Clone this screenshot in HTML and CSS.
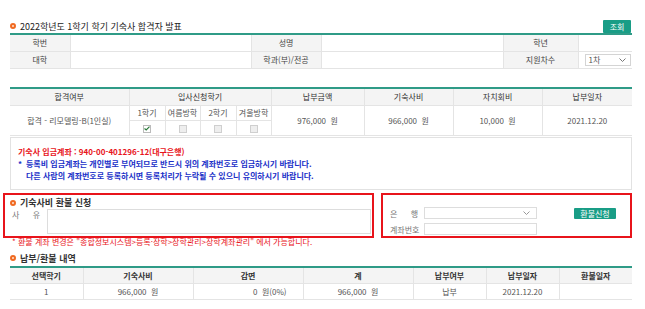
FILE: index.html
```html
<!DOCTYPE html>
<html lang="ko">
<head>
<meta charset="UTF-8">
<title>기숙사 합격자 발표</title>
<link rel="stylesheet" href="styles.css">
</head>
<body>

<div class="page">
    <div class="title-row">
        <h2 class="sec-title"><span class="dot"></span>2022학년도 1학기 학기 기숙사 합격자 발표</h2>
        <button class="btn btn-search">조회</button>
    </div>

    <table class="grid info">
        <colgroup>
            <col style="width:60px"><col style="width:181px"><col style="width:70px">
            <col style="width:182px"><col style="width:75px"><col style="width:54px">
        </colgroup>
        <tr>
            <th>학번</th><td></td>
            <th>성명</th><td></td>
            <th>학년</th><td></td>
        </tr>
        <tr>
            <th>대학</th><td></td>
            <th>학과(부)/전공</th><td></td>
            <th>지원차수</th>
            <td class="left">
                <div class="select small">1차
                    <svg width="7" height="4" viewBox="0 0 7 4"><polyline points="0.5,0.5 3.5,3.5 6.5,0.5" fill="none" stroke="#777" stroke-width="1"/></svg>
                </div>
            </td>
        </tr>
    </table>

    <table class="grid result">
        <colgroup>
            <col style="width:119px"><col style="width:36px"><col style="width:35px">
            <col style="width:36px"><col style="width:35px"><col style="width:93px">
            <col style="width:89px"><col style="width:89px"><col style="width:90px">
        </colgroup>
        <tr class="head">
            <th>합격여부</th>
            <th colspan="4">입사신청학기</th>
            <th>납부금액</th>
            <th>기숙사비</th>
            <th>자치회비</th>
            <th>납부일자</th>
        </tr>
        <tr class="sub">
            <td rowspan="2">합격 - 리모델링-B(1인실)</td>
            <td>1학기</td><td>여름방학</td><td>2학기</td><td>겨울방학</td>
            <td rowspan="2">976,000 &nbsp;원</td>
            <td rowspan="2">966,000 &nbsp;원</td>
            <td rowspan="2">10,000 &nbsp;원</td>
            <td rowspan="2">2021.12.20</td>
        </tr>
        <tr class="checks">
            <td><span class="check on"><svg width="6" height="5" viewBox="0 0 6 5"><polyline points="0.5,2.5 2.2,4 5.5,0.6" fill="none" stroke="#2a7a3a" stroke-width="1.2"/></svg></span></td>
            <td><span class="check"></span></td>
            <td><span class="check"></span></td>
            <td><span class="check"></span></td>
        </tr>
    </table>

    <div class="notice">
        <p class="red">기숙사 입금계좌 : 940-00-401296-12(대구은행)</p>
        <p class="blue"><span class="star">*</span>등록비 입금계좌는 개인별로 부여되므로 반드시 위의 계좌번호로 입금하시기 바랍니다.</p>
        <p class="blue indent">다른 사람의 계좌번호로 등록하시면 등록처리가 누락될 수 있으니 유의하시기 바랍니다.</p>
    </div>

    <div class="refund">
        <div class="mark refund-reason">
            <h2 class="sec-title sub"><span class="dot"></span>기숙사비 환불 신청</h2>
            <div class="reason-row">
                <span class="spread reason-label"><span>사</span><span>유</span></span>
                <textarea class="reason-box"></textarea>
            </div>
        </div>
        <div class="mark refund-account">
            <span class="spread bank-label"><span>은</span><span>행</span></span>
            <div class="select bank">
                <svg width="7" height="4" viewBox="0 0 7 4"><polyline points="0.5,0.5 3.5,3.5 6.5,0.5" fill="none" stroke="#999" stroke-width="1"/></svg>
            </div>
            <button class="btn btn-refund">환불신청</button>
            <span class="bank-label">계좌번호</span>
            <input type="text" class="account-input">
        </div>
    </div>

    <p class="note">* 환불 계좌 변경은 "종합정보시스템&gt;등록·장학&gt;장학관리&gt;장학계좌관리" 에서 가능합니다.</p>

    <h2 class="sec-title sub history-title"><span class="dot"></span>납부/환불 내역</h2>

    <table class="grid history">
        <colgroup>
            <col style="width:73px"><col style="width:110px"><col style="width:110px">
            <col style="width:110px"><col style="width:73px"><col style="width:73px">
            <col style="width:73px">
        </colgroup>
        <tr class="head">
            <th>선택학기</th><th>기숙사비</th><th>감면</th><th>계</th>
            <th>납부여부</th><th>납부일자</th><th>환불일자</th>
        </tr>
        <tr>
            <td>1</td>
            <td>966,000 &nbsp;원</td>
            <td class="right">0 &nbsp;원(0%)</td>
            <td>966,000 &nbsp;원</td>
            <td>납부</td>
            <td>2021.12.20</td>
            <td></td>
        </tr>
    </table>
</div>

</body>
</html>
```

FILE: styles.css
```css
body {
    margin: 0;
    background-color: #fff;
    font-family: "Noto Sans CJK KR", "Noto Sans", sans-serif;
    font-size: 8px;
    color: #555;
}
.page {
    width: 622px;
    margin-left: 10px;
    padding-top: 19px;
}
.title-row {
    display: flex;
    justify-content: space-between;
    align-items: center;
    height: 14px;
}
.sec-title {
    display: flex;
    align-items: center;
    gap: 4px;
    margin: 0;
    font-size: 9px;
    line-height: 11px;
    font-weight: normal;
    color: #222;
}
.sec-title.sub {
    font-weight: bold;
    color: #333;
}
.dot {
    width: 2px;
    height: 2px;
    border: 2px solid #f06a22;
    border-radius: 50%;
    background-color: #fde3d3;
}
.btn {
    font-family: inherit;
    font-size: 8px;
    color: #fff;
    background-color: #199d86;
    border: none;
    border-radius: 1px;
    padding: 0;
    cursor: pointer;
}
.btn-search {
    width: 28px;
    height: 13px;
    margin-right: 1px;
}

/* tables */
.grid {
    width: 622px;
    border-collapse: collapse;
    table-layout: fixed;
    border-top: 2px solid #2f9b87;
    border-left: hidden;
    border-right: hidden;
}
.grid th, .grid td {
    border: 1px solid #e4e4e4;
    padding: 0;
    text-align: center;
    font-weight: normal;
    line-height: 10px;
}
.info th {
    background-color: #f4f4f4;
    color: #444;
    height: 16px;
}
.info td {
    height: 16px;
}
.info td.left {
    text-align: left;
    padding-left: 6px;
}
.select {
    display: flex;
    justify-content: space-between;
    align-items: center;
    box-sizing: border-box;
    border: 1px solid #d4d4d4;
    background-color: #fff;
    color: #555;
}
.select.small {
    width: 46px;
    height: 12px;
    padding: 0 4px 0 3px;
}

.result {
    margin-top: 18px;
}
.result .head th {
    background-color: #f4f4f4;
    color: #333;
    height: 16px;
}
.result .sub td {
    height: 14px;
}
.result .checks td {
    height: 14px;
}
.check {
    display: inline-flex;
    justify-content: center;
    align-items: center;
    box-sizing: border-box;
    width: 8px;
    height: 8px;
    border: 1px solid #cfcfcf;
    background-color: #eee;
    vertical-align: middle;
}
.check.on {
    background-color: #fff;
    border-color: #bbb;
}

/* notice */
.notice {
    margin-top: 1px;
    border: 1px solid #e2e2e2;
    padding: 8px 7px 7px;
}
.notice p {
    margin: 0;
    font-weight: bold;
    line-height: 12px;
}
.red {
    color: #e8141b;
}
.blue {
    color: #2030c8;
}
.star {
    display: inline-block;
    width: 8px;
}
.indent {
    padding-left: 8px;
}

/* refund */
.refund {
    display: flex;
    gap: 7px;
    margin: 3px 0 0 -7px;
}
.mark {
    box-sizing: border-box;
    border: 2px solid #e8141b;
    height: 45px;
}
.refund-reason {
    width: 371px;
    padding: 2px 1px 0 5px;
}
.reason-row {
    display: flex;
    margin-top: 1px;
}
.spread {
    display: flex;
    justify-content: space-between;
}
.reason-label {
    width: 28px;
    margin: 0 7px 0 2px;
    line-height: 11px;
    color: #777;
}
.reason-box {
    flex: 1;
    height: 25px;
    box-sizing: border-box;
    border: 1px solid #ddd;
    resize: none;
    margin: 0;
}
.refund-account {
    flex: 1;
    display: grid;
    grid-template-columns: 34px 113px auto;
    grid-template-rows: 12px 12px;
    row-gap: 4px;
    align-items: center;
    align-content: start;
    padding: 12px 0 0 7px;
}
.bank-label {
    white-space: nowrap;
    color: #777;
}
.bank-label.spread {
    width: 28px;
}
.select.bank {
    height: 12px;
    justify-content: flex-end;
    padding-right: 6px;
    border-color: #ddd;
}
.btn-refund {
    width: 42px;
    height: 11px;
    margin-left: 37px;
}
.account-input {
    box-sizing: border-box;
    width: 113px;
    height: 12px;
    border: 1px solid #ddd;
    margin: 0;
    padding: 0;
}

.note {
    margin: 0;
    line-height: 8px;
    padding-left: 2px;
    color: #e8141b;
}

/* history */
.history-title {
    margin-top: 6px;
    height: 12px;
}
.history {
    margin-top: 2px;
}
.history .head th {
    background-color: #f4f4f4;
    color: #333;
    font-weight: bold;
    height: 15px;
}
.history td {
    height: 15px;
}
.history td.right {
    text-align: right;
    padding-right: 16px;
}
```
